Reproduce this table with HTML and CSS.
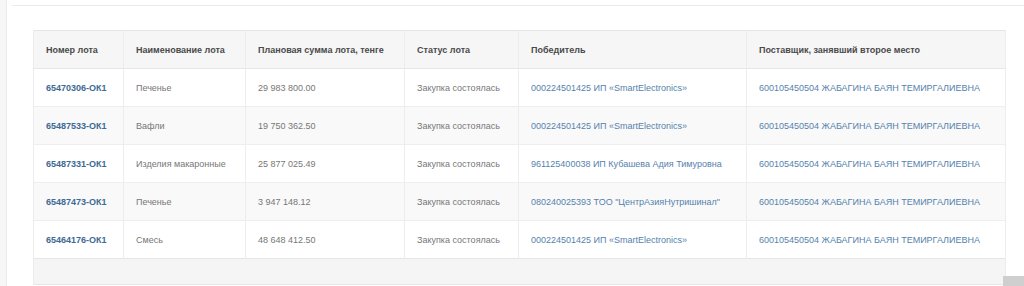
FILE: index.html
```
<!DOCTYPE html>
<html lang="ru">
<head>
<meta charset="utf-8">
<link rel="stylesheet" href="styles.css">
</head>
<body>
<div class="page">
  <div class="side"></div>
  <div class="main">
    <div class="rule"></div>
    <table class="lots">
      <colgroup>
        <col class="c1"><col class="c2"><col class="c3"><col class="c4"><col class="c5"><col class="c6">
      </colgroup>
      <thead>
        <tr>
          <th>Номер лота</th>
          <th>Наименование лота</th>
          <th>Плановая сумма лота, тенге</th>
          <th>Статус лота</th>
          <th>Победитель</th>
          <th>Поставщик, занявший второе место</th>
        </tr>
      </thead>
      <tbody>
        <tr>
          <td><a class="lot" href="#">65470306-ОК1</a></td>
          <td>Печенье</td>
          <td>29 983 800.00</td>
          <td>Закупка состоялась</td>
          <td><a class="org" href="#">000224501425 ИП «SmartElectronics»</a></td>
          <td><a class="org" href="#">600105450504 ЖАБАГИНА БАЯН ТЕМИРГАЛИЕВНА</a></td>
        </tr>
        <tr>
          <td><a class="lot" href="#">65487533-ОК1</a></td>
          <td>Вафли</td>
          <td>19 750 362.50</td>
          <td>Закупка состоялась</td>
          <td><a class="org" href="#">000224501425 ИП «SmartElectronics»</a></td>
          <td><a class="org" href="#">600105450504 ЖАБАГИНА БАЯН ТЕМИРГАЛИЕВНА</a></td>
        </tr>
        <tr>
          <td><a class="lot" href="#">65487331-ОК1</a></td>
          <td>Изделия макаронные</td>
          <td>25 877 025.49</td>
          <td>Закупка состоялась</td>
          <td><a class="org" href="#">961125400038 ИП Кубашева Адия Тимуровна</a></td>
          <td><a class="org" href="#">600105450504 ЖАБАГИНА БАЯН ТЕМИРГАЛИЕВНА</a></td>
        </tr>
        <tr>
          <td><a class="lot" href="#">65487473-ОК1</a></td>
          <td>Печенье</td>
          <td>3 947 148.12</td>
          <td>Закупка состоялась</td>
          <td><a class="org" href="#">080240025393 ТОО "ЦентрАзияНутришинал"</a></td>
          <td><a class="org" href="#">600105450504 ЖАБАГИНА БАЯН ТЕМИРГАЛИЕВНА</a></td>
        </tr>
        <tr>
          <td><a class="lot" href="#">65464176-ОК1</a></td>
          <td>Смесь</td>
          <td>48 648 412.50</td>
          <td>Закупка состоялась</td>
          <td><a class="org" href="#">000224501425 ИП «SmartElectronics»</a></td>
          <td><a class="org" href="#">600105450504 ЖАБАГИНА БАЯН ТЕМИРГАЛИЕВНА</a></td>
        </tr>
      </tbody>
      <tfoot>
        <tr><td colspan="6"></td></tr>
      </tfoot>
    </table>
  </div>
</div>
<div class="scroll-thumb"></div>
</body>
</html>
```

FILE: styles.css
```
html, body {
  margin: 0;
  padding: 0;
  background: #ffffff;
  overflow: hidden;
}
body {
  font-family: "Liberation Sans", Arial, sans-serif;
  font-size: 9px;
  color: #777777;
  height: 286px;
}
.page {
  display: flex;
  height: 286px;
}
.side {
  width: 6px;
  background: #f6f6f6;
  border-right: 1px solid #ececec;
  flex: none;
}
.main {
  flex: 1;
  padding-top: 5px;
  padding-left: 5px;
}
.rule {
  border-top: 1px solid #ececec;
}
.lots {
  margin-top: 24px;
  margin-left: 21px;
  width: 972px;
  border-collapse: collapse;
  table-layout: fixed;
  border: 1px solid #e6e6e6;
}
.c1 { width: 90px; }
.c2 { width: 122px; }
.c3 { width: 159px; }
.c4 { width: 114px; }
.c5 { width: 228px; }
.c6 { width: 259px; }
.lots th, .lots td {
  text-align: left;
  padding: 0 12px;
  border-left: 1px solid #ededed;
  border-right: 1px solid #ededed;
  white-space: nowrap;
  overflow: hidden;
}
.lots th {
  height: 37px;
  background: #f6f6f6;
  color: #4a4a4a;
  font-weight: bold;
  border-bottom: 1px solid #e6e6e6;
}
.lots tbody td {
  height: 37px;
  border-top: 1px solid #eeeeee;
}
.lots tbody tr:nth-child(even) td {
  background: #f9f9f9;
}
.lots tfoot td {
  height: 25px;
  background: #f5f5f5;
  border-top: 1px solid #e6e6e6;
}
a {
  text-decoration: none;
}
.lot {
  color: #3d6a93;
  font-weight: bold;
}
.org {
  color: #5582ad;
}
.scroll-thumb {
  position: absolute;
  right: 0;
  bottom: 0;
  width: 21px;
  height: 10px;
  background: #cfcfcf;
}
```
